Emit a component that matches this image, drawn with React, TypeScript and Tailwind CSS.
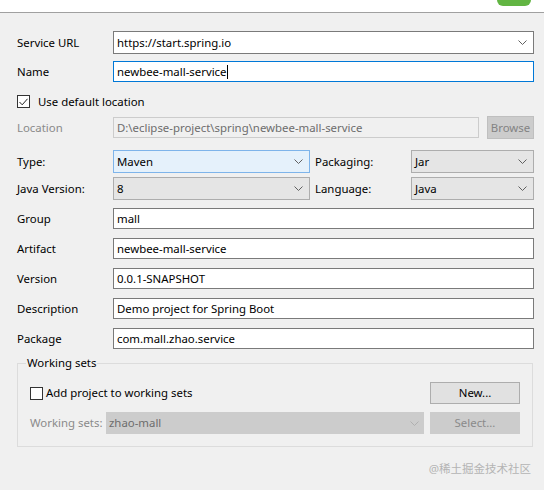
import React from 'react';

const font = "font-['Segoe_UI','Noto_Sans',sans-serif]";

const Chevron: React.FC<{ className?: string }> = ({ className = 'text-[#606060]' }) => (
  <svg width="9" height="5" viewBox="0 0 9 5" className={className}>
    <polyline points="0.5,0.5 4.5,4.5 8.5,0.5" fill="none" stroke="currentColor" strokeWidth="1" />
  </svg>
);

const Label: React.FC<{ children: React.ReactNode; muted?: boolean }> = ({ children, muted }) => (
  <div className={`w-[96px] shrink-0 whitespace-nowrap ${muted ? 'text-[#8a8a8a]' : 'text-black'}`}>{children}</div>
);

const TextField: React.FC<{ value: string; focused?: boolean }> = ({ value, focused }) => (
  <div
    className={`flex-1 h-[21px] flex items-center px-[3px] bg-white border ${
      focused ? 'border-[#0078d7]' : 'border-[#7a7a7a]'
    }`}
  >
    <span>{value}</span>
    {focused && <span className="w-px h-[14px] bg-black" />}
  </div>
);

const Combo: React.FC<{ value: string; hover?: boolean; className?: string }> = ({ value, hover, className = '' }) => (
  <div
    className={`h-[23px] flex items-center justify-between pl-[3px] pr-[6px] border ${
      hover ? 'bg-[#e5f1fb] border-[#7eb4ea]' : 'bg-[#e5e5e5] border-[#adadad]'
    } ${className}`}
  >
    <span>{value}</span>
    <Chevron />
  </div>
);

const Row: React.FC<{ label: string; value: string; className?: string }> = ({ label, value, className = 'mt-[9px]' }) => (
  <div className={`flex items-center h-[21px] ${className}`}>
    <Label>{label}</Label>
    <TextField value={value} />
  </div>
);

export default function App() {
  return (
    <div className={`w-[544px] h-[490px] bg-[#f0f0f0] text-[11.4px] leading-none overflow-hidden ${font}`}>
      <div className="h-[13px] bg-white border-b border-[#a0a0a0] flex justify-end">
        <div className="w-[34px] h-[6px] mr-[13px] bg-[#62b543] rounded-b-[6px]" />
      </div>

      <div className="pl-[17px] pr-[10px]">
        <div className="flex items-center h-[23px] mt-[18px]">
          <Label>Service URL</Label>
          <div className="flex-1 h-[23px] flex items-center justify-between pl-[3px] pr-[6px] bg-white border border-[#7a7a7a]">
            <span>https://start.spring.io</span>
            <Chevron />
          </div>
        </div>

        <div className="flex items-center h-[21px] mt-[7px]">
          <Label>Name</Label>
          <TextField value="newbee-mall-service" focused />
        </div>

        <div className="flex items-center h-[13px] mt-[13px] gap-[8px]">
          <div className="w-[13px] h-[13px] bg-white border border-[#333333] flex items-center justify-center">
            <svg width="9" height="8" viewBox="0 0 9 8">
              <polyline points="0.5,4 3.2,6.8 8.5,0.8" fill="none" stroke="#222222" strokeWidth="1" />
            </svg>
          </div>
          <span>Use default location</span>
        </div>

        <div className="flex items-center h-[23px] mt-[8px]">
          <Label muted>Location</Label>
          <div className="flex-1 h-[21px] flex items-center px-[3px] bg-[#f0f0f0] border border-[#cccccc] text-[#6d6d6d]">
            D:\eclipse-project\spring\newbee-mall-service
          </div>
          <div className="w-[47px] h-[23px] ml-[8px] flex items-center justify-center bg-[#cccccc] border border-[#bfbfbf] text-[#838383]">
            Browse
          </div>
        </div>

        <div className="flex items-center h-[23px] mt-[11px]">
          <Label>Type:</Label>
          <Combo value="Maven" hover className="w-[197px]" />
          <div className="w-[101px] pl-[5px]">Packaging:</div>
          <Combo value="Jar" className="flex-1" />
        </div>

        <div className="flex items-center h-[23px] mt-[4px]">
          <Label>Java Version:</Label>
          <Combo value="8" className="w-[197px]" />
          <div className="w-[101px] pl-[5px]">Language:</div>
          <Combo value="Java" className="flex-1" />
        </div>

        <Row label="Group" value="mall" className="mt-[8px]" />
        <Row label="Artifact" value="newbee-mall-service" />
        <Row label="Version" value="0.0.1-SNAPSHOT" />
        <Row label="Description" value="Demo project for Spring Boot" />
        <Row label="Package" value="com.mall.zhao.service" />

        <div className="relative mt-[14px] mr-[1px] border border-[#dcdcdc] pl-[12px] pr-[12px] pt-[18px] pb-[12px]">
          <div className="absolute -top-[7px] left-[8px] px-[1px] bg-[#f0f0f0]">Working sets</div>
          <div className="flex items-center justify-between h-[22px]">
            <div className="flex items-center gap-[3px]">
              <div className="w-[13px] h-[13px] bg-white border border-[#333333]" />
              <span>Add project to working sets</span>
            </div>
            <div className="w-[90px] h-[22px] flex items-center justify-center bg-[#e1e1e1] border border-[#adadad]">
              New...
            </div>
          </div>
          <div className="flex items-center h-[22px] mt-[8px]">
            <div className="w-[76px] shrink-0 whitespace-nowrap text-[#8a8a8a]">Working sets:</div>
            <div className="flex-1 h-[22px] flex items-center justify-between pl-[3px] pr-[5px] bg-[#cccccc] text-[#6d6d6d]">
              <span>zhao-mall</span>
              <Chevron className="text-[#b0b0b0]" />
            </div>
            <div className="w-[90px] h-[22px] ml-[6px] flex items-center justify-center bg-[#cccccc] text-[#8a8a8a]">
              Select...
            </div>
          </div>
        </div>

        <div className="mt-[16px] pr-[3px] text-right text-[11.5px] text-[#b4b4b4] font-['Noto_Sans','Noto_Sans_CJK_SC',sans-serif]">
          @稀土掘金技术社区
        </div>
      </div>
    </div>
  );
}
